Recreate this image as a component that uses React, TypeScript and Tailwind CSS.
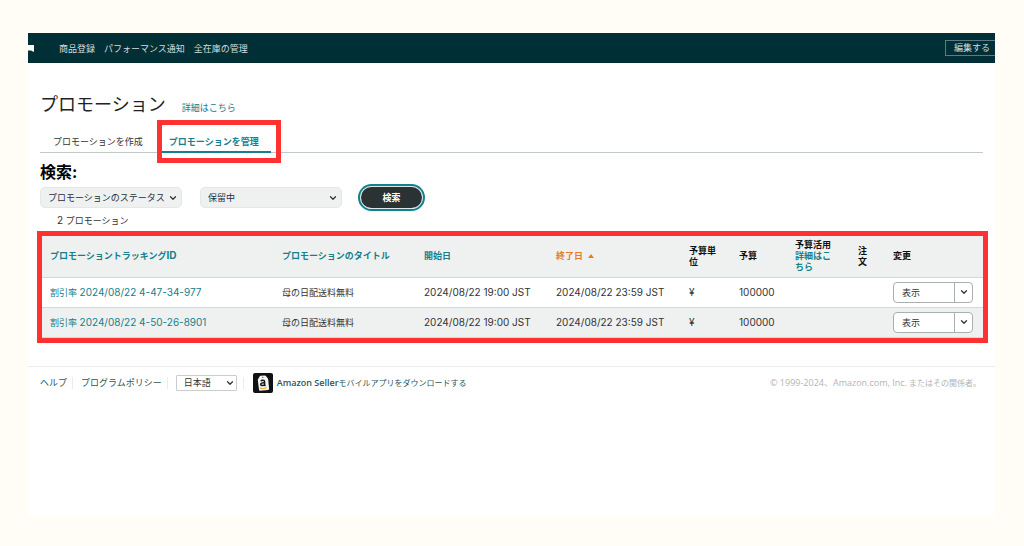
import React from "react";
import { ChevronDown } from "lucide-react";

const navLinks = ["商品登録", "パフォーマンス通知", "全在庫の管理"];

const rows = [
  { id: "2024/08/22 4-47-34-977", title: "母の日配送料無料", start: "2024/08/22 19:00 JST", end: "2024/08/22 23:59 JST", unit: "¥", budget: "100000" },
  { id: "2024/08/22 4-50-26-8901", title: "母の日配送料無料", start: "2024/08/22 19:00 JST", end: "2024/08/22 23:59 JST", unit: "¥", budget: "100000" },
];

const columnWidths = ["w-[232px]", "w-[142px]", "w-[132px]", "w-[133px]", "w-[50px]", "w-[56px]", "w-[63px]", "w-[35px]", "w-[100px]"];

function FilterSelect({ label, value }: { label: string; value: string }) {
  return (
    <div className="relative w-[142px]">
      <select aria-label={label} className="block h-[21px] w-full appearance-none rounded-[5px] border border-[#e3e7e7] bg-[#eff1f1] pl-[7px] pr-3 text-[9px] leading-[19px] text-[#232f3e]">
        <option>{value}</option>
      </select>
      <ChevronDown className="pointer-events-none absolute right-1 top-1.5 size-[10px] text-[#333]" strokeWidth={3} />
    </div>
  );
}

function AppIcon() {
  return (
    <svg viewBox="0 0 20 20" className="size-5" aria-hidden="true">
      <rect width="20" height="20" rx="2" fill="#101314" />
      <path d="M5 6.200 6.600 3.400q.3-.6 1-.7l4.200-.2q.7 0 1.100.5l2 2.500q.3.400.3 1l.9 9.300q0 1-1 1.100l-8 .9q-1 0-1.100-1L4.800 7q0-.5.2-.8Z" fill="#f6f5f2" />
      <circle cx="9.800" cy="4.300" r=".6" fill="#333" />
      <path d="M7.900 8.200c.5-1.200 3.700-1.400 3.700.5v3.900M11.600 9.900c-2.400-.2-4 .2-3.900 1.500.1 1.500 3.100 1.700 3.900-.2M11.600 12.100l.9.700" fill="none" stroke="#161616" strokeWidth="1.500" />
      <path d="M6.800 14.800c2.300 1.200 4.700 1.100 7-.3" fill="none" stroke="#f2b25c" strokeWidth="1.300" />
    </svg>
  );
}

export default function App() {
  return (
    <div className="flex min-h-screen flex-col bg-[#fffdf6] pb-[30px] pl-[28px] pr-[29px] pt-[33px] font-['Inter','Noto_Sans_CJK_JP',sans-serif] text-[9px] leading-[11px] text-[#333]">
      <div className="flex-1 bg-white">
        <header className="flex h-[30px] items-center bg-[#002f36] text-[#d5dddd]">
          <svg viewBox="0 0 6 7" className="h-[7px] w-[6px] text-white" aria-hidden="true">
            <path d="M0 0h6v7L3 5.500H0Z" fill="currentColor" />
          </svg>
          <nav className="ml-[25px] flex flex-1 gap-[9px]">
            {navLinks.map((l) => (
              <a key={l} href="#">{l}</a>
            ))}
          </nav>
          <button className="h-4 border border-r-0 border-[#5c7b80] pl-2 pr-[5px] text-[9px] leading-[14px]">編集する</button>
        </header>

        <main className="px-3">
          <div className="flex items-baseline gap-4 pt-[28px]">
            <h1 className="text-[18px] leading-[28px] text-[#222]">プロモーション</h1>
            <a href="#" className="text-[#14808c]">詳細はこちら</a>
          </div>

          <div className="mt-3 flex gap-[2px] border-b border-[#c3c8c8] pl-px">
            <a href="#" className="block px-3 pb-1 pt-[5px] leading-[12px]">プロモーションを作成</a>
            <div className="relative">
              <a href="#" aria-current="page" className="-mb-px block border-b-2 border-[#14808c] px-3 pb-[3px] pt-[5px] font-bold leading-[12px] text-[#14808c]">プロモーションを管理</a>
              <span className="pointer-events-none absolute -bottom-[11px] -right-[10px] -top-[11px] left-0 border-[5px] border-[#ff3131]" />
            </div>
          </div>

          <h2 className="mt-[9px] text-[16px] font-bold leading-[20px] text-black">検索:</h2>

          <div className="mt-[5px] flex h-[21px] items-center">
            <FilterSelect label="検索条件" value="プロモーションのステータス" />
            <div className="ml-[18px]">
              <FilterSelect label="ステータス" value="保留中" />
            </div>
            <button className="ml-[19px] h-[21px] w-[61px] rounded-full bg-[#2b3234] text-[9px] font-bold text-white shadow-[0_0_0_1px_#dfe8e9,0_0_0_3px_#14808c]">検索</button>
          </div>
          <p className="mt-[7px] pl-[17px]"><span className="text-[10px]">2</span> プロモーション</p>

          <div className="relative mt-[9px]">
            <table className="w-full table-fixed border-collapse text-left">
              <colgroup>
                {columnWidths.map((w, i) => (
                  <col key={i} className={w} />
                ))}
              </colgroup>
              <thead>
                <tr className="h-[42px] border-b border-[#d3d8d8] bg-[#eff1f1] text-[#111] [&>th]:px-[10px] [&>th]:py-0 [&>th]:font-bold">
                  <th><a href="#" className="text-[#14808c]">プロモーショントラッキング<span className="text-[10px]">ID</span></a></th>
                  <th><a href="#" className="text-[#14808c]">プロモーションのタイトル</a></th>
                  <th><a href="#" className="text-[#14808c]">開始日</a></th>
                  <th>
                    <a href="#" className="flex items-center gap-[5px] text-[#e77d1e]">
                      終了日
                      <svg viewBox="0 0 6 4" className="h-1 w-1.5" aria-hidden="true"><path d="M0 4 3 0l3 4Z" fill="currentColor" /></svg>
                    </a>
                  </th>
                  <th>予算単位</th>
                  <th>予算</th>
                  <th>予算活用<a href="#" className="text-[#14808c]">詳細はこちら</a></th>
                  <th>注文</th>
                  <th>変更</th>
                </tr>
              </thead>
              <tbody>
                {rows.map((r) => (
                  <tr key={r.id} className="h-[30px] border-b border-[#d3d8d8] even:bg-[#eff1f1] [&>td]:whitespace-nowrap [&>td]:px-[10px] [&>td]:py-0">
                    <td><a href="#" className="text-[#14808c]">割引率 <span className="text-[10px]">{r.id}</span></a></td>
                    <td>{r.title}</td>
                    <td className="text-[10px]">{r.start}</td>
                    <td className="text-[10px]">{r.end}</td>
                    <td className="text-[10px]">{r.unit}</td>
                    <td className="text-[10px]">{r.budget}</td>
                    <td />
                    <td />
                    <td>
                      <div className="flex h-[21px] rounded-[4px] border border-[#a9b0b0] bg-white">
                        <button className="flex-1 pl-2 text-left text-[9px]">表示</button>
                        <button aria-label="その他の操作" className="flex w-[18px] items-center justify-center border-l border-[#a9b0b0]">
                          <ChevronDown className="size-[10px]" strokeWidth={3} />
                        </button>
                      </div>
                    </td>
                  </tr>
                ))}
              </tbody>
            </table>
            <span className="pointer-events-none absolute -bottom-[5px] -left-[3px] -right-[5px] -top-1 border-[5px] border-[#ff3131]" />
          </div>
        </main>

        <footer className="mt-[28px] flex items-center border-t border-[#e9eded] px-3 py-[6px] font-['Open_Sans','Noto_Sans_CJK_JP',sans-serif] text-[#2f555b]">
          <a href="#">ヘルプ</a>
          <span className="ml-[5px] h-3 w-px bg-[#e9eded]" />
          <a href="#" className="ml-[8px]">プログラムポリシー</a>
          <span className="ml-[5px] h-3 w-px bg-[#e9eded]" />
          <div className="relative ml-[8px] w-[61px]">
            <select aria-label="言語" className="block h-4 w-full appearance-none rounded-[1px] border border-[#c9cdcd] bg-white pl-[7px] text-[9px] leading-[14px] text-[#333]">
              <option>日本語</option>
            </select>
            <ChevronDown className="pointer-events-none absolute right-0.5 top-[3px] size-[10px] text-[#333]" strokeWidth={3} />
          </div>
          <span className="ml-[6px] h-3 w-px bg-[#e9eded]" />
          <a href="#" className="ml-[9px] flex items-center gap-1">
            <AppIcon />
            <span className="text-[8px]"><span className="text-[9px] font-semibold">Amazon Seller</span>モバイルアプリをダウンロードする</span>
          </a>
          <p className="ml-auto mr-0.5 whitespace-nowrap text-[8px] text-[#b4b4b4]"><span className="text-[9px]">© 1999-2024、Amazon.com, Inc.</span> またはその関係者。</p>
        </footer>
      </div>
    </div>
  );
}
